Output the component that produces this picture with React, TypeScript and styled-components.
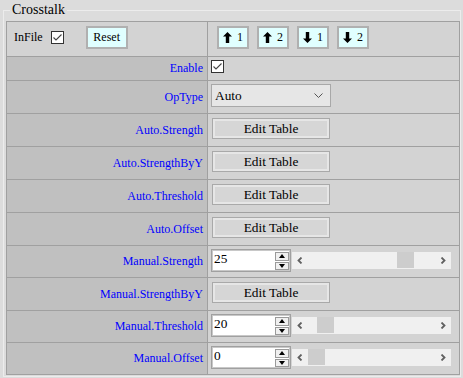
import React from "react";
import styled, { createGlobalStyle } from "styled-components";

type Kind = "check" | "select" | "table" | "number";

interface IRow {
  label: string;
  kind: Kind;
  h: number;
  value?: number;
  max?: number;
}

const rows: IRow[] = [
  { label: "Enable", kind: "check", h: 23 },
  { label: "OpType", kind: "select", h: 32 },
  { label: "Auto.Strength", kind: "table", h: 32 },
  { label: "Auto.StrengthByY", kind: "table", h: 32 },
  { label: "Auto.Threshold", kind: "table", h: 32 },
  { label: "Auto.Offset", kind: "table", h: 32 },
  { label: "Manual.Strength", kind: "number", h: 31, value: 25, max: 31 },
  { label: "Manual.StrengthByY", kind: "table", h: 32 },
  { label: "Manual.Threshold", kind: "number", h: 31, value: 20, max: 255 },
  { label: "Manual.Offset", kind: "number", h: 31, value: 0, max: 255 },
];

const THUMB_RANGE = 110;
const SERIF = `"Liberation Serif", "DejaVu Serif", serif`;

const GlobalStyle = createGlobalStyle`
  html, body {
    margin: 0;
    background: #dcdcdc;
  }
  body {
    font-family: ${SERIF};
    color: #000;
  }
  button, input, select {
    font-family: ${SERIF};
  }
`;

//Small drawn glyphs
const Tick = () => (
  <svg width="11" height="11" viewBox="0 0 11 11">
    <polyline points="1.5,5.5 4,8 9.5,2.5" fill="none" stroke="#444" strokeWidth="1.1" />
  </svg>
);

const Arrow = ({ down }: { down?: boolean }) => (
  <svg width="9" height="11" viewBox="0 0 9 11" style={{ transform: down ? "rotate(180deg)" : undefined }}>
    <polygon points="4.5,0 9,4.6 6.2,4.6 6.2,11 2.8,11 2.8,4.6 0,4.6" fill="#000" />
  </svg>
);

const Chevron = ({ dir }: { dir: "left" | "right" | "down" }) => {
  if (dir === "down")
    return (
      <svg width="9" height="5" viewBox="0 0 9 5">
        <polyline points="0.5,0.5 4.5,4.5 8.5,0.5" fill="none" stroke="#555" strokeWidth="1" />
      </svg>
    );
  const pts = dir === "left" ? "4.5,0.5 1.5,3.5 4.5,6.5" : "1.5,0.5 4.5,3.5 1.5,6.5";
  return (
    <svg width="6" height="7" viewBox="0 0 6 7">
      <polyline points={pts} fill="none" stroke="#606060" strokeWidth="1.8" />
    </svg>
  );
};

const Tri = ({ down }: { down?: boolean }) => (
  <svg width="6" height="4" viewBox="0 0 6 4">
    <polygon points={down ? "0,0 6,0 3,4" : "0,4 6,4 3,0"} fill="#000" />
  </svg>
);

const NumberField = ({ value, max }: { value: number; max: number }) => (
  <>
    <NumberBox>
      <NumberInput readOnly value={value} />
      <Spin>
        <SpinButton>
          <Tri />
        </SpinButton>
        <SpinButton>
          <Tri down />
        </SpinButton>
      </Spin>
    </NumberBox>
    <ScrollBar>
      <ScrollArrow>
        <Chevron dir="left" />
      </ScrollArrow>
      <Track>
        <Thumb style={{ marginLeft: Math.round((value / max) * THUMB_RANGE) }} />
      </Track>
      <ScrollArrow>
        <Chevron dir="right" />
      </ScrollArrow>
    </ScrollBar>
  </>
);

const renderValue = (row: IRow) => {
  switch (row.kind) {
    case "check":
      return (
        <CheckBox>
          <Tick />
        </CheckBox>
      );
    case "select":
      return (
        <SelectWrap>
          <Select defaultValue="Auto">
            <option>Auto</option>
            <option>Manual</option>
          </Select>
          <SelectIcon>
            <Chevron dir="down" />
          </SelectIcon>
        </SelectWrap>
      );
    case "table":
      return <EditButton type="button">Edit Table</EditButton>;
    default:
      return <NumberField value={row.value ?? 0} max={row.max ?? 100} />;
  }
};

const App = () => {
  return (
    <>
      <GlobalStyle />
      <Fieldset>
        <Legend>Crosstalk</Legend>
        <Grid>
          <Row $h={34}>
            <LabelCell $top>
              <span>InFile</span>
              <CheckBox>
                <Tick />
              </CheckBox>
              <ToolButton type="button" $w={42}>
                Reset
              </ToolButton>
            </LabelCell>
            <ValueCell $top>
              <ToolButton type="button">
                <Arrow />1
              </ToolButton>
              <ToolButton type="button">
                <Arrow />2
              </ToolButton>
              <ToolButton type="button">
                <Arrow down />1
              </ToolButton>
              <ToolButton type="button">
                <Arrow down />2
              </ToolButton>
            </ValueCell>
          </Row>
          {rows.map((row) => (
            <Row key={row.label} $h={row.h}>
              <LabelCell>{row.label}</LabelCell>
              <ValueCell>{renderValue(row)}</ValueCell>
            </Row>
          ))}
        </Grid>
      </Fieldset>
    </>
  );
};

const Fieldset = styled.fieldset`
  margin: 2px 2px 0 3px;
  padding: 3px 0 1px 2px;
  border: 1px solid #ececec;
  min-width: 0;
  font-family: ${SERIF};
`;

const Legend = styled.legend`
  font-size: 14px;
  line-height: 16px;
  padding: 0 2px;
  margin-left: 4px;
`;

const Grid = styled.div`
  display: flex;
  flex-direction: column;
  gap: 1px;
  padding: 1px;
  background: #a0a0a0;
`;

const Row = styled.div<{ $h: number }>`
  display: grid;
  grid-template-columns: 200px 1fr;
  column-gap: 1px;
  height: ${(p) => p.$h}px;
`;

const LabelCell = styled.div<{ $top?: boolean }>`
  display: flex;
  align-items: center;
  justify-content: ${(p) => (p.$top ? "flex-start" : "flex-end")};
  gap: 8px;
  padding: ${(p) => (p.$top ? "0 0 3px 7px" : "0 4px 0 0")};
  background: ${(p) => (p.$top ? "#d3d3d3" : "#c0c0c0")};
  color: ${(p) => (p.$top ? "#000" : "#0000ff")};
  font-size: 12px;
  button {
    margin-left: 14px;
  }
`;

const ValueCell = styled.div<{ $top?: boolean }>`
  display: flex;
  align-items: flex-start;
  gap: ${(p) => (p.$top ? "8px" : "1px")};
  padding: ${(p) => (p.$top ? "4px 0 0 9px" : "3px 0 0 3px")};
  background: #d3d3d3;
`;

const CheckBox = styled.span`
  display: inline-flex;
  align-items: center;
  justify-content: center;
  box-sizing: border-box;
  width: 13px;
  height: 13px;
  border: 1px solid #333;
  background: #fff;
`;

const ToolButton = styled.button<{ $w?: number }>`
  display: flex;
  align-items: center;
  justify-content: center;
  gap: 5px;
  box-sizing: border-box;
  width: ${(p) => p.$w ?? 32}px;
  height: 23px;
  padding: 0;
  border: 2px solid #b0b0b0;
  background: #e0ffff;
  font-family: ${SERIF};
  font-size: 12px;
  color: #000;
`;

const SelectWrap = styled.div`
  position: relative;
  width: 120px;
  height: 23px;
`;

const Select = styled.select`
  appearance: none;
  box-sizing: border-box;
  width: 100%;
  height: 100%;
  padding: 0 0 0 3px;
  border: 1px solid #a8a8a8;
  border-radius: 0;
  background: #e6e6e6;
  font-family: ${SERIF};
  font-size: 13.33px;
  color: #000;
  outline: none;
`;

const SelectIcon = styled.span`
  position: absolute;
  right: 8px;
  top: 9px;
  display: flex;
  pointer-events: none;
`;

const EditButton = styled.button`
  box-sizing: border-box;
  width: 118px;
  height: 21px;
  margin: 1px 0 0 1px;
  padding: 0;
  border: 1px solid #a9a9a9;
  box-shadow: inset 0 0 0 2px #e6e6e6;
  background: #d6d6d6;
  font-family: ${SERIF};
  font-size: 13.33px;
  color: #000;
`;

const NumberBox = styled.div`
  display: flex;
  box-sizing: border-box;
  width: 80px;
  height: 23px;
  border: 1px solid #a0a0a0;
  box-shadow: inset 0 0 0 1px #c8c8c8;
  background: #fff;
  padding: 1px;
`;

const NumberInput = styled.input`
  flex: 1;
  min-width: 0;
  border: none;
  padding: 0 0 0 1px;
  background: transparent;
  font-family: ${SERIF};
  font-size: 13.33px;
  line-height: 16px;
  align-self: flex-start;
  outline: none;
`;

const Spin = styled.div`
  display: flex;
  flex-direction: column;
  gap: 1px;
  width: 14px;
  margin-top: 1px;
`;

const SpinButton = styled.span`
  display: flex;
  align-items: center;
  justify-content: center;
  box-sizing: border-box;
  height: 9px;
  border: 1px solid #9a9a9a;
  background: #f0f0f0;
`;

const ScrollBar = styled.div`
  display: flex;
  width: 159px;
  height: 17px;
  margin-top: 3px;
  background: #f0f0f0;
`;

const ScrollArrow = styled.span`
  display: flex;
  align-items: center;
  justify-content: center;
  width: 16px;
`;

const Track = styled.div`
  flex: 1;
  display: flex;
`;

const Thumb = styled.div`
  width: 17px;
  height: 16px;
  background: #cdcdcd;
`;

export default App;
